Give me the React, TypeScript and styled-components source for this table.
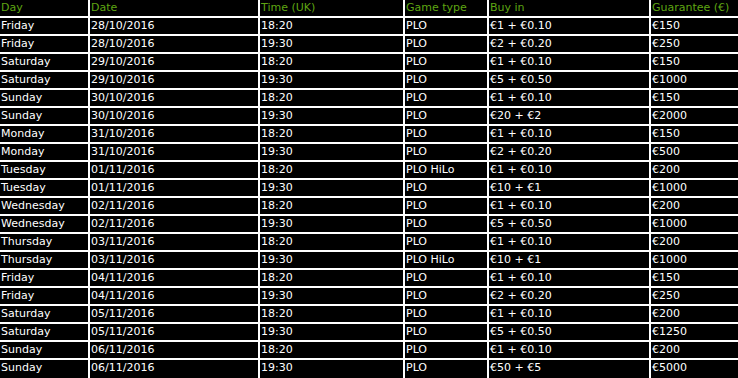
import React from "react";
import styled, { createGlobalStyle } from "styled-components";

const GlobalStyle = createGlobalStyle`
	html, body {
		margin: 0;
		padding: 0;
		background: #000;
	}
	body {
		font-family: "DejaVu Sans", Verdana, sans-serif;
		font-size: 11px;
	}
`;

const Table = styled.div`
	display: grid;
	grid-template-columns: 88px 168px 143px 82px 160px 87px;
	grid-template-rows: repeat(20, 16px) 18px;
	gap: 2px;
	width: 738px;
	height: 378px;
	background: #fff;
	overflow: hidden;
`;

const Cell = styled.div<{ header?: boolean }>`
	background: #000;
	color: ${props => (props.header ? "#5ea512" : "#fff")};
	padding-left: 1px;
	line-height: 16px;
	white-space: nowrap;
	overflow: hidden;
`;

const headers = ["Day", "Date", "Time (UK)", "Game type", "Buy in", "Guarantee (€)"];

const rows: string[][] = [
	["Friday", "28/10/2016", "18:20", "PLO", "€1 + €0.10", "€150"],
	["Friday", "28/10/2016", "19:30", "PLO", "€2 + €0.20", "€250"],
	["Saturday", "29/10/2016", "18:20", "PLO", "€1 + €0.10", "€150"],
	["Saturday", "29/10/2016", "19:30", "PLO", "€5 + €0.50", "€1000"],
	["Sunday", "30/10/2016", "18:20", "PLO", "€1 + €0.10", "€150"],
	["Sunday", "30/10/2016", "19:30", "PLO", "€20 + €2", "€2000"],
	["Monday", "31/10/2016", "18:20", "PLO", "€1 + €0.10", "€150"],
	["Monday", "31/10/2016", "19:30", "PLO", "€2 + €0.20", "€500"],
	["Tuesday", "01/11/2016", "18:20", "PLO HiLo", "€1 + €0.10", "€200"],
	["Tuesday", "01/11/2016", "19:30", "PLO", "€10 + €1", "€1000"],
	["Wednesday", "02/11/2016", "18:20", "PLO", "€1 + €0.10", "€200"],
	["Wednesday", "02/11/2016", "19:30", "PLO", "€5 + €0.50", "€1000"],
	["Thursday", "03/11/2016", "18:20", "PLO", "€1 + €0.10", "€200"],
	["Thursday", "03/11/2016", "19:30", "PLO HiLo", "€10 + €1", "€1000"],
	["Friday", "04/11/2016", "18:20", "PLO", "€1 + €0.10", "€150"],
	["Friday", "04/11/2016", "19:30", "PLO", "€2 + €0.20", "€250"],
	["Saturday", "05/11/2016", "18:20", "PLO", "€1 + €0.10", "€200"],
	["Saturday", "05/11/2016", "19:30", "PLO", "€5 + €0.50", "€1250"],
	["Sunday", "06/11/2016", "18:20", "PLO", "€1 + €0.10", "€200"],
	["Sunday", "06/11/2016", "19:30", "PLO", "€50 + €5", "€5000"],
];

export default function App() {
	return (
		<>
			<GlobalStyle />
			<Table>
				{headers.map(h => (
					<Cell header key={h}>
						{h}
					</Cell>
				))}
				{rows.map((row, i) =>
					row.map((value, j) => <Cell key={`${i}-${j}`}>{value}</Cell>)
				)}
			</Table>
		</>
	);
}
